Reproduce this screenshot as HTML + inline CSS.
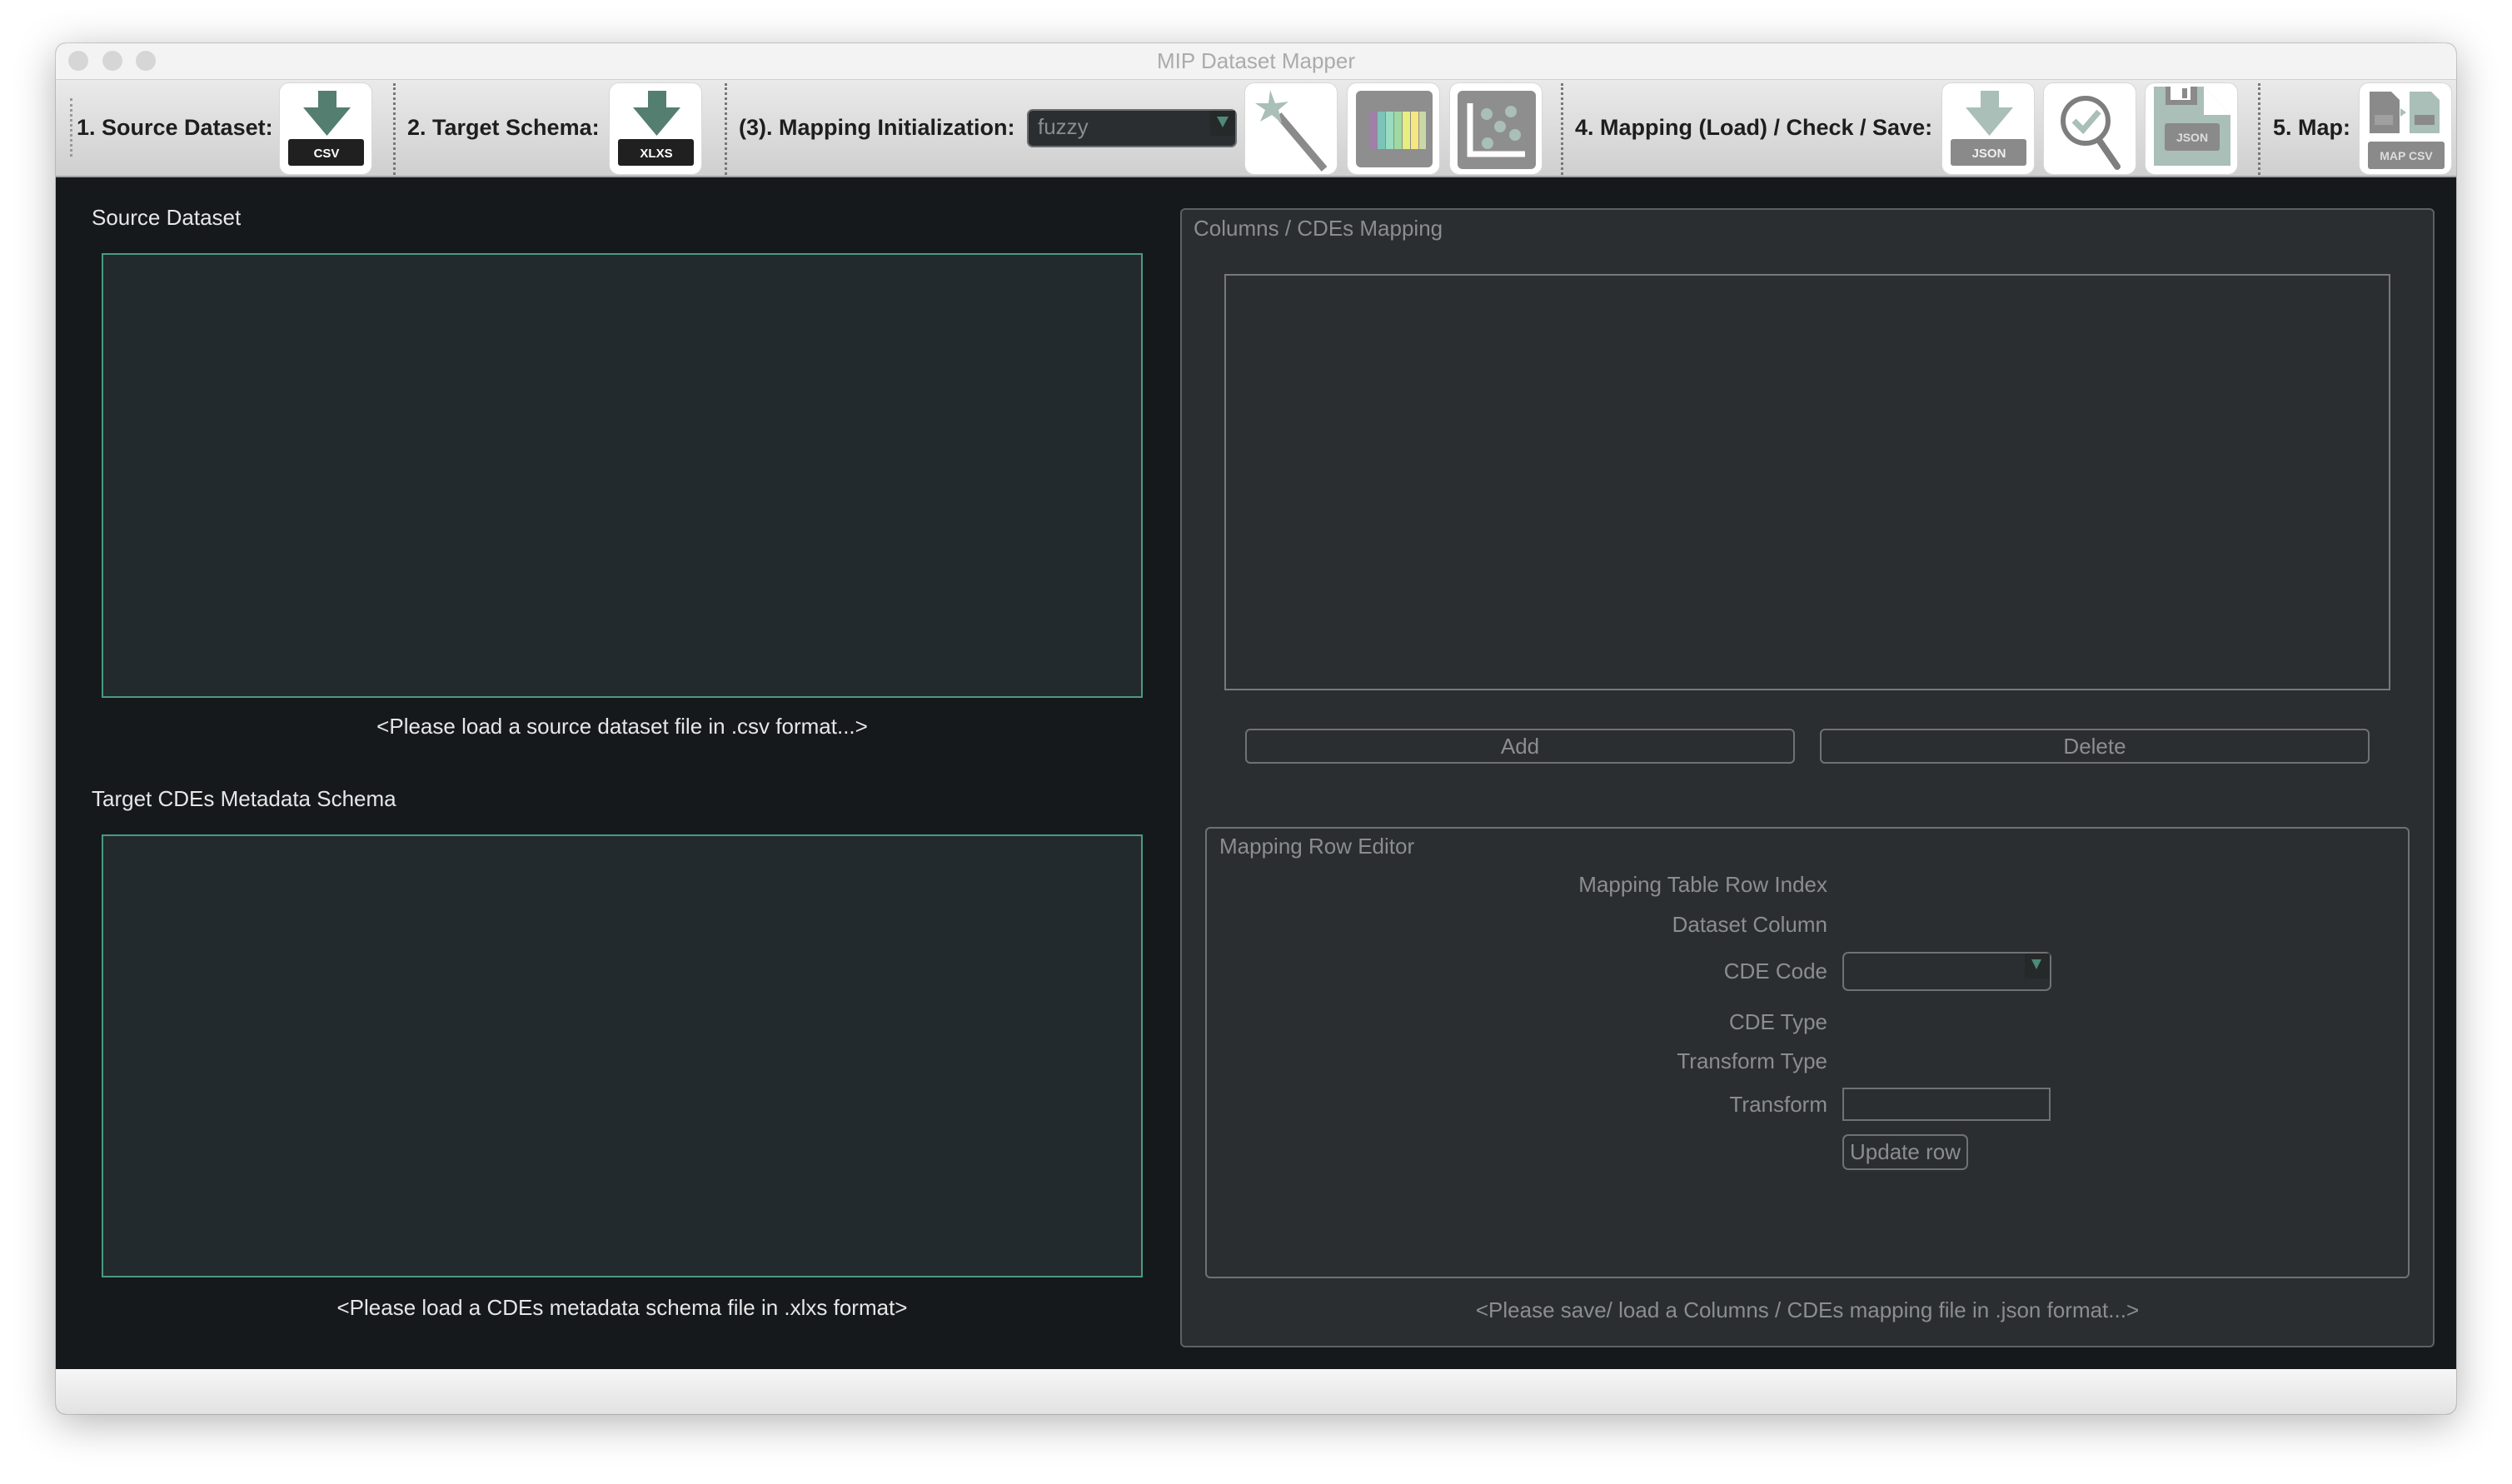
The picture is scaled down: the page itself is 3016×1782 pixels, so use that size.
<!DOCTYPE html>
<html><head><meta charset="utf-8"><style>
*{box-sizing:border-box;margin:0;padding:0}
body{width:3016px;height:1782px;background:#fff;position:relative;overflow:hidden;font-family:"Liberation Sans",sans-serif}
.a{position:absolute}
#win{left:67px;top:52px;width:2882px;height:1646px;border-radius:12px;box-shadow:0 10px 50px rgba(0,0,0,.3),0 0 0 1px rgba(0,0,0,.15);overflow:hidden;background:#15191c}
.tl{width:24px;height:24px;border-radius:50%;background:#d6d6d6;top:61px}
.lbl{font-weight:bold;font-size:27px;color:#1e1e1e;top:138px}
.btn{background:#fff;border-radius:12px;border:1px solid #d8d8d8;top:99px;width:112px;height:111px}
.btn svg{width:112px;height:111px;display:block}
.sep{top:100px;height:110px;border-left:3px dotted #777;width:0}
.t{font-size:26px;white-space:nowrap}
.rl{color:#8b8d8f;font-size:26px;text-align:right;width:400px;left:1794px}
</style></head><body>
<div class="a" id="win"></div>
<div class="a" style="left:67px;top:52px;width:2882px;height:44px;background:#f3f3f3;border-radius:12px 12px 0 0;border-bottom:1px solid #d0d0d0"></div>
<div class="a tl" style="left:82px"></div><div class="a tl" style="left:123px"></div><div class="a tl" style="left:163px"></div>
<div class="a t" style="left:0;width:3016px;text-align:center;top:58px;color:#ababab">MIP Dataset Mapper</div>
<div class="a" style="left:67px;top:96px;width:2882px;height:117px;background:linear-gradient(#eaeaea,#cfcfcf);border-bottom:2px solid #a0a0a0"></div>
<div class="a" style="left:84px;top:118px;height:70px;border-left:3px dotted #999"></div>
<div class="a lbl" style="left:92px">1. Source Dataset:</div>
<div class="a btn" style="left:335px"><svg viewBox="0 0 112 111"><rect x="46" y="9" width="22" height="21" fill="#547e6f"/><polygon points="28,29 85,29 56.5,63" fill="#547e6f"/><rect x="10" y="67" width="91" height="32" rx="3" fill="#202020"/><text x="56" y="89" font-size="15" font-weight="bold" fill="#fff" text-anchor="middle" font-family="Liberation Sans">CSV</text></svg></div>
<div class="a sep" style="left:472px"></div>
<div class="a lbl" style="left:489px">2. Target Schema:</div>
<div class="a btn" style="left:731px"><svg viewBox="0 0 112 111"><rect x="46" y="9" width="22" height="21" fill="#547e6f"/><polygon points="28,29 85,29 56.5,63" fill="#547e6f"/><rect x="10" y="67" width="91" height="32" rx="3" fill="#202020"/><text x="56" y="89" font-size="15" font-weight="bold" fill="#fff" text-anchor="middle" font-family="Liberation Sans">XLXS</text></svg></div>
<div class="a sep" style="left:870px"></div>
<div class="a lbl" style="left:887px">(3). Mapping Initialization:</div>
<div class="a" style="left:1233px;top:131px;width:252px;height:46px;background:#2b2e30;border:2px solid #6a6c6e;border-radius:7px"></div>
<div class="a" style="left:1453px;top:133px;width:30px;height:30px;background:#25292a"></div>
<div class="a" style="left:1461px;top:140px;width:0;height:0;border-left:7px solid transparent;border-right:7px solid transparent;border-top:13px solid #4e8a76"></div>
<div class="a t" style="left:1246px;top:137px;color:#8a8d8f">fuzzy</div>
<div class="a btn" style="left:1494px"><svg viewBox="0 0 112 111"><line x1="40" y1="38" x2="95" y2="103" stroke="#8a8a8a" stroke-width="9"/><polygon points="30,8 36,24 52,22 40,32 44,48 32,38 18,46 24,32 12,24 28,24" fill="#a9bfb8"/></svg></div>
<div class="a btn" style="left:1617px"><svg viewBox="0 0 112 111"><rect x="10" y="9" width="92" height="92" rx="6" fill="#8e8e8e"/><rect x="26" y="34" width="9" height="45" fill="#a07fa8"/><rect x="36" y="34" width="9" height="45" fill="#7cc3b8"/><rect x="46" y="34" width="9" height="45" fill="#99dcc0"/><rect x="56" y="34" width="9" height="45" fill="#9ed9a4"/><rect x="66" y="34" width="9" height="45" fill="#e6ee80"/><rect x="76" y="34" width="9" height="45" fill="#f6e780"/><rect x="86" y="34" width="8" height="45" fill="#c9d8a8"/></svg></div>
<div class="a btn" style="left:1740px"><svg viewBox="0 0 112 111"><rect x="9" y="9" width="94" height="94" rx="6" fill="#8e8e8e"/><path d="M24 24 V85 H90" stroke="#fff" stroke-width="7" fill="none"/><g fill="#a9bfb8"><circle cx="44" cy="37" r="7"/><circle cx="73" cy="34" r="7"/><circle cx="60" cy="52" r="7"/><circle cx="78" cy="62" r="7"/><circle cx="45" cy="72" r="7"/></g></svg></div>
<div class="a sep" style="left:1874px"></div>
<div class="a lbl" style="left:1891px">4. Mapping (Load) / Check / Save:</div>
<div class="a btn" style="left:2331px"><svg viewBox="0 0 112 111"><rect x="46" y="9" width="22" height="21" fill="#a9bfb8"/><polygon points="28,29 85,29 56.5,63" fill="#a9bfb8"/><rect x="10" y="67" width="91" height="32" rx="3" fill="#8a8a8a"/><text x="56" y="89" font-size="15" font-weight="bold" fill="#eee" text-anchor="middle" font-family="Liberation Sans">JSON</text></svg></div>
<div class="a btn" style="left:2453px"><svg viewBox="0 0 112 111"><circle cx="50" cy="45" r="27" stroke="#7e7e7e" stroke-width="6" fill="none"/><line x1="66" y1="68" x2="88" y2="100" stroke="#7e7e7e" stroke-width="8" stroke-linecap="round"/><path d="M36 45 L47 56 L66 34" stroke="#a9bfb8" stroke-width="7" fill="none"/></svg></div>
<div class="a btn" style="left:2575px"><svg viewBox="0 0 112 111"><path d="M10 4 H70 L102 38 V99 H10 Z" fill="#a9bfb8"/><rect x="24" y="4" width="38" height="22" fill="#8a8a8a"/><rect x="30" y="4" width="24" height="16" fill="#fff"/><rect x="44" y="6" width="6" height="12" fill="#8a8a8a"/><path d="M70 4 V38 H102" fill="#fff"/><rect x="23" y="48" width="66" height="33" rx="3" fill="#8a8a8a"/><text x="56" y="70" font-size="14" font-weight="bold" fill="#ddd" text-anchor="middle" font-family="Liberation Sans">JSON</text></svg></div>
<div class="a sep" style="left:2711px"></div>
<div class="a lbl" style="left:2729px">5. Map:</div>
<div class="a btn" style="left:2832px"><svg viewBox="0 0 112 111"><path d="M12 10 H38 L48 20 V60 H12 Z" fill="#8a8a8a"/><path d="M60 10 H86 L96 20 V60 H60 Z" fill="#a9bfb8"/><rect x="18" y="38" width="22" height="12" fill="#a0a0a0"/><rect x="66" y="38" width="24" height="12" fill="#8a8a8a"/><polygon points="49,30 56,35 49,40" fill="#a9bfb8"/><rect x="10" y="70" width="92" height="33" rx="3" fill="#8a8a8a"/><text x="56" y="92" font-size="14" font-weight="bold" fill="#ddd" text-anchor="middle" font-family="Liberation Sans">MAP CSV</text></svg></div>

<!-- left -->
<div class="a t" style="left:110px;top:246px;color:#e6e6e6">Source Dataset</div>
<div class="a" style="left:122px;top:304px;width:1250px;height:534px;background:#222a2d;border:2px solid #4a9a82"></div>
<div class="a t" style="left:122px;width:1250px;text-align:center;top:857px;color:#e6e6e6">&lt;Please load a source dataset file in .csv format...&gt;</div>
<div class="a t" style="left:110px;top:944px;color:#e6e6e6">Target CDEs Metadata Schema</div>
<div class="a" style="left:122px;top:1002px;width:1250px;height:532px;background:#222a2d;border:2px solid #4a9a82"></div>
<div class="a t" style="left:122px;width:1250px;text-align:center;top:1555px;color:#e6e6e6">&lt;Please load a CDEs metadata schema file in .xlxs format&gt;</div>

<!-- right -->
<div class="a" style="left:1417px;top:250px;width:1506px;height:1368px;background:#2b2e30;border:2px solid #5e6163;border-radius:6px"></div>
<div class="a t" style="left:1433px;top:259px;color:#8b8d8f">Columns / CDEs Mapping</div>
<div class="a" style="left:1470px;top:329px;width:1400px;height:500px;border:2px solid #77797b"></div>
<div class="a t" style="left:1495px;top:875px;width:660px;height:42px;border:2px solid #6f7173;border-radius:6px;text-align:center;line-height:38px;color:#8b8d8f">Add</div>
<div class="a t" style="left:2185px;top:875px;width:660px;height:42px;border:2px solid #6f7173;border-radius:6px;text-align:center;line-height:38px;color:#8b8d8f">Delete</div>
<div class="a" style="left:1447px;top:993px;width:1446px;height:542px;border:2px solid #6f7173;border-radius:6px"></div>
<div class="a t" style="left:1464px;top:1001px;color:#8b8d8f">Mapping Row Editor</div>
<div class="a rl" style="top:1047px">Mapping Table Row Index</div>
<div class="a rl" style="top:1095px">Dataset Column</div>
<div class="a rl" style="top:1151px">CDE Code</div>
<div class="a rl" style="top:1212px">CDE Type</div>
<div class="a rl" style="top:1259px">Transform Type</div>
<div class="a rl" style="top:1311px">Transform</div>
<div class="a" style="left:2212px;top:1143px;width:251px;height:47px;border:2px solid #6f7173;border-radius:7px"></div>
<div class="a" style="left:2431px;top:1145px;width:30px;height:30px;background:#25292a"></div>
<div class="a" style="left:2439px;top:1152px;width:0;height:0;border-left:6px solid transparent;border-right:6px solid transparent;border-top:12px solid #4e8a76"></div>
<div class="a" style="left:2212px;top:1306px;width:250px;height:40px;border:2px solid #6f7173"></div>
<div class="a t" style="left:2212px;top:1362px;width:151px;height:43px;border:2px solid #6f7173;border-radius:7px;text-align:center;line-height:39px;color:#8b8d8f">Update row</div>
<div class="a t" style="left:1417px;width:1506px;text-align:center;top:1558px;color:#8b8d8f">&lt;Please save/ load a Columns / CDEs mapping file in .json format...&gt;</div>

<div class="a" style="left:67px;top:1644px;width:2882px;height:54px;background:linear-gradient(#f6f6f6,#e2e2e2);border-radius:0 0 12px 12px"></div>
</body></html>
